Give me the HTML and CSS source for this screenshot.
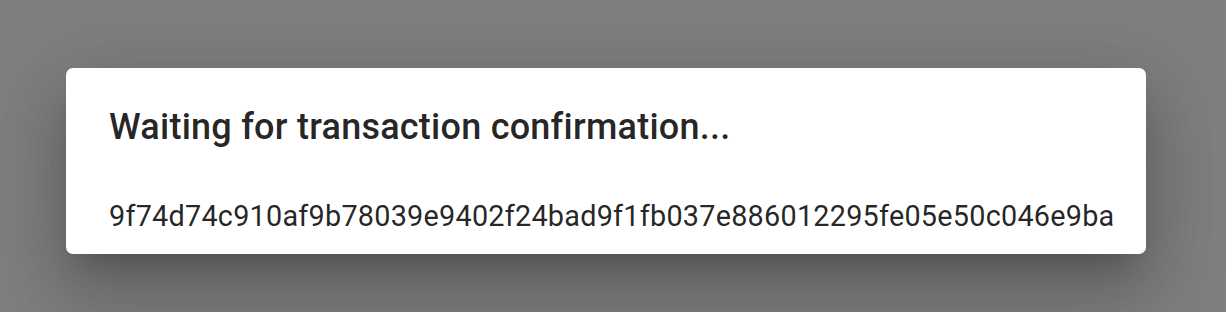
FILE: index.html
```html
<!DOCTYPE html>
<html>
<head>
<meta charset="utf-8">
<link rel="stylesheet" href="styles.css">
</head>
<body>
<div class="backdrop">
  <div class="dialog">
    <h2 class="title">Waiting for transaction confirmation...</h2>
    <p class="hash">9f74d74c910af9b78039e9402f24bad9f1fb037e886012295fe05e50c046e9ba</p>
  </div>
</div>
</body>
</html>
```
FILE: styles.css
```css
html, body {
  margin: 0;
  padding: 0;
  height: 100%;
  background: #7f7f7f;
}
.backdrop {
  height: 312px;
  padding: 68px 0 0 66px;
  box-sizing: border-box;
  font-family: Roboto, "Liberation Sans", sans-serif;
}
.dialog {
  width: 1080px;
  background: #fff;
  border-radius: 7px;
  padding: 30px 43px 16px 43px;
  box-sizing: border-box;
  box-shadow: 0 20px 27px -13px rgba(0,0,0,0.2), 0 43px 68px 5px rgba(0,0,0,0.14), 0 16px 83px 14px rgba(0,0,0,0.12);
}
.title {
  margin: 0;
  font-size: 36px;
  font-weight: 500;
  line-height: 58px;
  letter-spacing: 0.24px;
  color: rgba(0,0,0,0.87);
}
.hash {
  margin: 39px 0 0 0;
  font-size: 28.8px;
  font-weight: 400;
  line-height: 43px;
  letter-spacing: 0.24px;
  color: rgba(0,0,0,0.87);
  white-space: nowrap;
}
```
